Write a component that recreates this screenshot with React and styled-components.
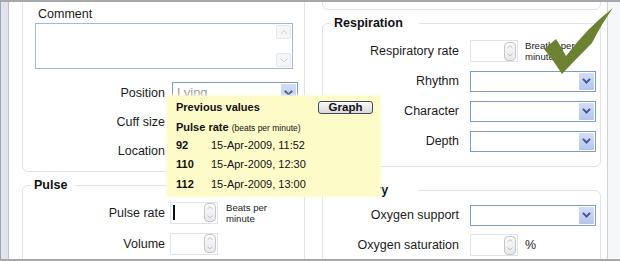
import React from "react";
import styled, { createGlobalStyle } from "styled-components";

const GlobalStyle = createGlobalStyle`
  html, body {
    margin: 0;
    padding: 0;
    background: #fff;
    overflow: hidden;
  }
  body {
    font-family: "Liberation Sans", Arial, sans-serif;
    color: #1c1c1c;
  }
`

const Frame = styled.div`
  position: relative;
  width: 620px;
  height: 261px;
  box-sizing: border-box;
  display: flex;
  border-top: 2px solid #a8a8a8;
  border-bottom: 2px solid #a8a8a8;
  overflow: hidden;
  background: #fff;
`
const Rail = styled.div`
  width: 9px;
  flex: none;
  box-sizing: border-box;
  background: #dfe4ee;
  border-left: 1px solid #a3a3a3;
  border-right: 1px solid #b9c2d3;
`
const Workspace = styled.div`
  flex: 1;
  min-width: 0;
  display: flex;
  gap: 17px;
  padding: 0 6px 0 13px;
  overflow: hidden;
`
const Column = styled.div`
  display: flex;
  flex-direction: column;
  ${p => p.$width ? `width: ${p.$width}px; flex: none;` : `flex: 1; min-width: 0;`}
`
const ScrollEdge = styled.div`
  width: 13px;
  flex: none;
  box-sizing: border-box;
  border-left: 1px solid #cfd3da;
  background: #f6f7f9;
`

const OpenPanel = styled.div`
  box-sizing: border-box;
  border: 1px solid #e0e3e8;
  border-radius: 6px;
  margin-top: ${p => p.$offset}px;
  ${p => p.$height ? `height: ${p.$height}px; flex: none;` : ""}
  padding: ${p => p.$pad || "0"};
`
const Section = styled.fieldset`
  margin: ${p => p.$gap}px 0 0;
  padding: ${p => p.$padTop}px 0 ${p => p.$padBottom}px;
  border: 1px solid #e0e3e8;
  border-radius: 6px;
  min-width: 0;
`
const Legend = styled.legend`
  margin-left: 8px;
  padding: 0 ${p => p.$tail}px 0 3px;
  font-size: 12.5px;
  font-weight: bold;
  line-height: 14px;
  color: #111;
`

const CommentLabel = styled.div`
  margin-left: 15px;
  font-size: 12.5px;
  line-height: 15px;
`
const CommentBox = styled.div`
  box-sizing: border-box;
  width: 258px;
  height: 46px;
  margin: 1px 0 0 12px;
  border: 1px solid #a3b9d2;
  background: #fff;
  display: flex;
  flex-direction: column;
  align-items: flex-end;
  justify-content: space-between;
  padding: 1px;
`
const ScrollArrow = styled.div`
  width: 15px;
  height: 14px;
  box-sizing: border-box;
  border: 1px solid #e4e7eb;
  border-radius: 2px;
  background: #f5f6f8;
  display: flex;
  align-items: center;
  justify-content: center;
`

const FieldGrid = styled.div`
  display: grid;
  grid-template-columns: ${p => p.$labelWidth}px auto;
  grid-auto-rows: ${p => p.$rowHeight}px;
  column-gap: ${p => p.$gap}px;
  align-items: center;
  margin-top: ${p => p.$top || 0}px;
`
const FieldLabel = styled.div`
  text-align: right;
  font-size: 12.5px;
  white-space: nowrap;
`
const FieldControl = styled.div`
  display: flex;
  align-items: center;
`

const SelectBox = styled.div`
  box-sizing: border-box;
  width: 126px;
  height: 21px;
  border: 1px solid #7f9db9;
  background: #fff;
  display: flex;
  align-items: stretch;
  justify-content: space-between;
`
const SelectValue = styled.span`
  padding-left: 4px;
  font-size: 13px;
  line-height: 19px;
  color: #9a9a9a;
`
const DropButton = styled.span`
  width: 15px;
  margin: 1px;
  border-radius: 1px;
  background: linear-gradient(#d3def8, #b3c4ee);
  display: flex;
  align-items: center;
  justify-content: center;
`

const SpinBox = styled.div`
  box-sizing: border-box;
  width: 48px;
  height: 22px;
  border: 1px solid #dde4ed;
  background: #fff;
  display: flex;
  align-items: center;
  padding: 0 1px 0 2px;
`
const Caret = styled.span`
  width: 2px;
  height: 15px;
  background: #111;
`
const SpinButton = styled.div`
  margin-left: auto;
  box-sizing: border-box;
  width: 12px;
  height: 19px;
  border: 1px solid #c6c6c6;
  border-radius: 4px;
  background: linear-gradient(#fbfbfb, #e8e8e8);
  display: flex;
  flex-direction: column;
  align-items: center;
  justify-content: space-around;
`
const Unit = styled.span`
  margin-left: ${p => p.$shift}px;
  width: ${p => p.$wrap ? "54px" : "auto"};
  font-size: ${p => p.$wrap ? 9.6 : 12.5}px;
  line-height: ${p => p.$wrap ? 11 : 14}px;
  color: #222;
`

const Popup = styled.div`
  position: absolute;
  left: 167px;
  top: 94px;
  width: 213px;
  height: 100px;
  box-sizing: border-box;
  padding: 3px 7px 0 9px;
  background: #fdfbc8;
  box-shadow: 0 0 3px 1px #fdfcd8;
  font-size: 11px;
  color: #111;
`
const PopHeader = styled.div`
  display: flex;
  align-items: center;
  justify-content: space-between;
  height: 16px;
  font-weight: bold;
`
const GraphButton = styled.button`
  width: 55px;
  height: 13px;
  padding: 0;
  border: 1px solid #3e4b5a;
  border-radius: 3px;
  background: linear-gradient(#fafafa, #d9d9d9);
  font-family: inherit;
  font-size: 11.5px;
  font-weight: bold;
  line-height: 10px;
  color: #111;
`
const PopTitle = styled.div`
  margin-top: 5px;
  height: 14px;
  line-height: 14px;
  font-weight: bold;
  small {
    font-size: 8.5px;
    font-weight: normal;
  }
`
const ValueGrid = styled.div`
  margin-top: 1px;
  display: grid;
  grid-template-columns: 35px auto;
  grid-auto-rows: 19.5px;
  align-items: center;
`
const Reading = styled.span`
  font-weight: bold;
`

const CheckMark = styled.svg`
  position: absolute;
  left: 540px;
  top: 3px;
`

const Chevron = ({ up, color, width = 8, weight = 1.6 }) => (
    <svg width={width} height={width * 0.6} viewBox="0 0 10 6">
        <path d={up ? "M1 5 L5 1 L9 5" : "M1 1 L5 5 L9 1"} fill="none" stroke={color} strokeWidth={weight} />
    </svg>
)

const Select = ({ value }) => (
    <SelectBox>
        <SelectValue>{value}</SelectValue>
        <DropButton><Chevron color="#46598a" width={9} weight={2.2} /></DropButton>
    </SelectBox>
)

const Spin = ({ focused }) => (
    <SpinBox>
        {focused && <Caret />}
        <SpinButton>
            <Chevron up color="#b3b3b3" width={6} weight={1.4} />
            <Chevron color="#b3b3b3" width={6} weight={1.4} />
        </SpinButton>
    </SpinBox>
)

const readings = [
    { value: "92", time: "15-Apr-2009, 11:52" },
    { value: "110", time: "15-Apr-2009, 12:30" },
    { value: "112", time: "15-Apr-2009, 13:00" }
]

const App = () => (
    <>
        <GlobalStyle />
        <Frame>
            <Rail />
            <Workspace>
                <Column $width={283}>
                    <OpenPanel $offset={-12} $pad="16px 0 6px 0">
                        <CommentLabel>Comment</CommentLabel>
                        <CommentBox>
                            <ScrollArrow><Chevron up color="#c9cdd4" width={8} weight={1.2} /></ScrollArrow>
                            <ScrollArrow><Chevron color="#c9cdd4" width={8} weight={1.2} /></ScrollArrow>
                        </CommentBox>
                        <FieldGrid $labelWidth={142} $rowHeight={29} $gap={7} $top={9}>
                            <FieldLabel>Position</FieldLabel>
                            <FieldControl><Select value="Lying" /></FieldControl>
                            <FieldLabel>Cuff size</FieldLabel>
                            <FieldControl />
                            <FieldLabel>Location</FieldLabel>
                            <FieldControl />
                        </FieldGrid>
                    </OpenPanel>
                    <Section $gap={6} $padTop={5} $padBottom={20}>
                        <Legend $tail={8}>Pulse</Legend>
                        <FieldGrid $labelWidth={142} $rowHeight={31} $gap={5}>
                            <FieldLabel>Pulse rate</FieldLabel>
                            <FieldControl>
                                <Spin focused />
                                <Unit $wrap $shift={8}>Beats per minute</Unit>
                            </FieldControl>
                            <FieldLabel>Volume</FieldLabel>
                            <FieldControl><Spin /></FieldControl>
                        </FieldGrid>
                    </Section>
                </Column>
                <Column>
                    <OpenPanel $offset={-32} $height={40} />
                    <Section $gap={6} $padTop={6} $padBottom={10}>
                        <Legend $tail={16}>Respiration</Legend>
                        <FieldGrid $labelWidth={136} $rowHeight={30} $gap={11}>
                            <FieldLabel>Respiratory rate</FieldLabel>
                            <FieldControl>
                                <Spin />
                                <Unit $wrap $shift={7}>Breaths per minute</Unit>
                            </FieldControl>
                            <FieldLabel>Rhythm</FieldLabel>
                            <FieldControl><Select /></FieldControl>
                            <FieldLabel>Character</FieldLabel>
                            <FieldControl><Select /></FieldControl>
                            <FieldLabel>Depth</FieldLabel>
                            <FieldControl><Select /></FieldControl>
                        </FieldGrid>
                    </Section>
                    <Section $gap={16} $padTop={3} $padBottom={20}>
                        <Legend $tail={30}>Oximetry</Legend>
                        <FieldGrid $labelWidth={136} $rowHeight={30} $gap={11}>
                            <FieldLabel>Oxygen support</FieldLabel>
                            <FieldControl><Select /></FieldControl>
                            <FieldLabel>Oxygen saturation</FieldLabel>
                            <FieldControl>
                                <Spin />
                                <Unit $shift={7}>%</Unit>
                            </FieldControl>
                        </FieldGrid>
                    </Section>
                </Column>
            </Workspace>
            <ScrollEdge />

            <Popup>
                <PopHeader>
                    <span>Previous values</span>
                    <GraphButton>Graph</GraphButton>
                </PopHeader>
                <PopTitle>Pulse rate <small>(beats per minute)</small></PopTitle>
                <ValueGrid>
                    {readings.map(r => (
                        <React.Fragment key={r.time}>
                            <Reading>{r.value}</Reading>
                            <span>{r.time}</span>
                        </React.Fragment>
                    ))}
                </ValueGrid>
            </Popup>

            <CheckMark width="76" height="72" viewBox="540 4 76 72">
                <path
                    d="M544,48 L556,38 Q562,47 566,55 Q588,26 613,7 Q602,22 592,42 Q576,58 562,73 Q554,60 544,48 Z"
                    fill="#6c8131"
                />
            </CheckMark>
        </Frame>
    </>
)

export default App
